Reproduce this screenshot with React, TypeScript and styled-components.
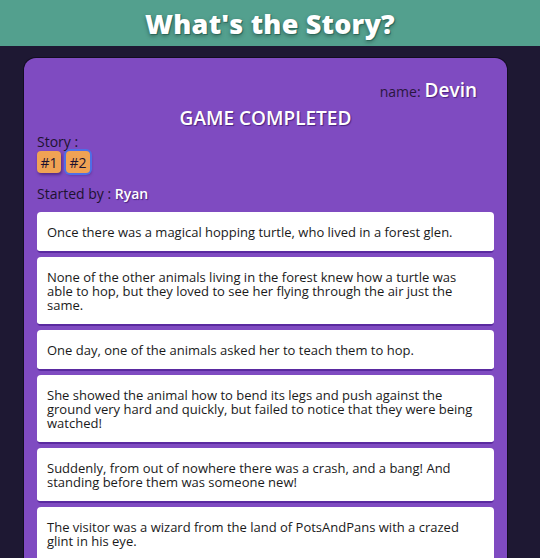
import React from "react";
import styled, { createGlobalStyle } from "styled-components";

const Global = createGlobalStyle`
  html, body { margin: 0; padding: 0; background: #1e1833; }
  body { font-family: "Open Sans", "Noto Sans", sans-serif; overflow: hidden; }
`;

const Page = styled.div`
  min-height: 558px;
  background: #1e1833;
`;

const Header = styled.header`
  height: 46px;
  background: #53a08e;
  display: flex;
  align-items: center;
  justify-content: center;
`;

const Title = styled.h1`
  margin: 0;
  font-family: "Open Sans", sans-serif;
  font-weight: 800;
  font-size: 27px;
  letter-spacing: 0.2px;
  color: #ffffff;
  text-shadow: 1px 1px 0 #2d6b5c, 0 2px 4px rgba(0, 0, 0, 0.35);
`;

const Main = styled.main`
  padding: 12px 33px 0 24px;
`;

const Card = styled.section`
  background: #7f4bc1;
  border-radius: 12px;
  box-shadow: 0 0 0 1px #120d20;
  padding: 19px 13px 20px;
  display: flex;
  flex-direction: column;
`;

const NameRow = styled.div`
  display: flex;
  justify-content: flex-end;
  align-items: baseline;
  gap: 4px;
  padding-right: 17px;
  font-size: 14px;
  color: #2a1640;
`;

const WhiteBold = styled.span<{ $size: number }>`
  color: #ffffff;
  font-weight: 600;
  font-size: ${(p) => p.$size}px;
  text-shadow: 1px 1px 1px #4a2382;
`;

const Status = styled.h2`
  margin: 3px 0 3px;
  text-align: center;
  font-size: 19px;
  font-weight: 600;
  color: #ffffff;
  line-height: 24px;
  text-shadow: 1px 1px 1px #4a2382;
`;

const Label = styled.div`
  font-size: 14px;
  line-height: 18px;
  color: #1d1230;
`;

const BadgeRow = styled.div`
  display: flex;
  gap: 5px;
  margin: 0 0 12px;
`;

const Badge = styled.button<{ $active?: boolean }>`
  font-family: "Open Sans", sans-serif;
  font-size: 14px;
  color: #1d1230;
  background: #f0a254;
  border: none;
  border-radius: 4px;
  padding: 0;
  width: 24px;
  height: 22px;
  display: flex;
  align-items: center;
  justify-content: center;
  box-shadow: ${(p) =>
    p.$active
      ? "0 0 0 2px #4f6ee6, 1px 2px 3px rgba(40,10,80,0.5)"
      : "1px 2px 3px rgba(40,10,80,0.5)"};
`;

const StoryList = styled.div`
  margin-top: 9px;
  display: flex;
  flex-direction: column;
  gap: 4px;
`;

const Entry = styled.div`
  background: #ffffff;
  border-radius: 4px;
  border-bottom: 2px solid #5a2aa0;
  padding: 13px 10px 12px;
  font-size: 13px;
  line-height: 14px;
  color: #1a1a1a;
`;

const lines = [
  "Once there was a magical hopping turtle, who lived in a forest glen.",
  "None of the other animals living in the forest knew how a turtle was able to hop, but they loved to see her flying through the air just the same.",
  "One day, one of the animals asked her to teach them to hop.",
  "She showed the animal how to bend its legs and push against the ground very hard and quickly, but failed to notice that they were being watched!",
  "Suddenly, from out of nowhere there was a crash, and a bang! And standing before them was someone new!",
  "The visitor was a wizard from the land of PotsAndPans with a crazed glint in his eye.",
];

export default function App() {
  return (
    <Page>
      <Global />
      <Header>
        <Title>What's the Story?</Title>
      </Header>
      <Main>
        <Card>
          <NameRow>
            <span>name:</span>
            <WhiteBold $size={19}>Devin</WhiteBold>
          </NameRow>
          <Status>GAME COMPLETED</Status>
          <Label>Story :</Label>
          <BadgeRow>
            <Badge>#1</Badge>
            <Badge $active>#2</Badge>
          </BadgeRow>
          <Label>
            Started by : <WhiteBold $size={14}>Ryan</WhiteBold>
          </Label>
          <StoryList>
            {lines.map((l, i) => (
              <Entry key={i}>{l}</Entry>
            ))}
          </StoryList>
        </Card>
      </Main>
    </Page>
  );
}
